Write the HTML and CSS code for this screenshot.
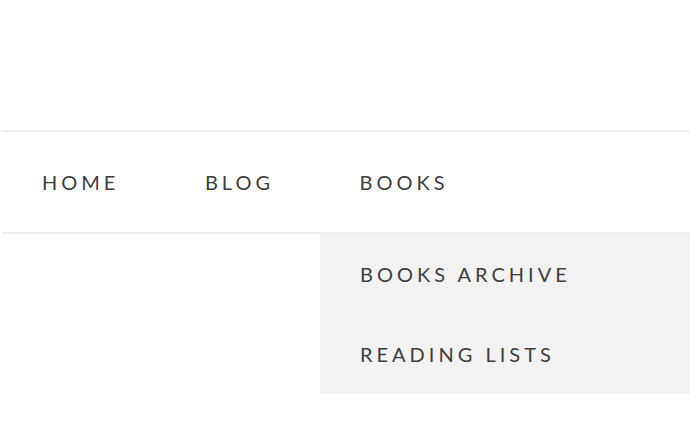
FILE: index.html
```html
<!DOCTYPE html>
<html lang="en">
<head>
    <title>Books</title>
    <meta name="viewport" content="width=device-width, initial-scale=1.0">
    <link rel="stylesheet" href="styles.css">
</head>
<body>

    <!-- Site header (logo area left empty) -->
    <header class="site-header"></header>

    <!-- Main navigation -->
    <nav class="main-nav">
        <ul class="menu">
            <li class="menu-item"><a href="#">Home</a></li>
            <li class="menu-item"><a href="#">Blog</a></li>
            <li class="menu-item"><a href="#">Books</a></li>
        </ul>
    </nav>

    <!-- Open dropdown under "Books" -->
    <div class="dropdown-row">
        <ul class="sub-menu">
            <li><a href="#">Books Archive</a></li>
            <li><a href="#">Reading Lists</a></li>
        </ul>
    </div>

</body>
</html>
```

FILE: styles.css
```css
body {
    margin: 0;
    background-color: #fff;
    color: #3d3d3d;
    font-family: 'Lato', 'Liberation Sans', sans-serif;
}

.site-header {
    height: 130px;
}

/* Navigation bar */
.main-nav {
    margin-left: 2px;
    border-top: 2px solid #eeeeee;
    border-bottom: 2px solid #eeeeee;
}

.menu {
    list-style: none;
    margin: 0;
    padding: 0;
    display: flex;
}

.menu-item a {
    display: block;
    height: 100px;
    line-height: 100px;
    padding: 0 45.5px 0 40px;
    color: #3d3d3d;
    text-decoration: none;
    text-transform: uppercase;
    font-size: 20px;
    letter-spacing: 4px;
}

/* Dropdown */
.dropdown-row {
    display: flex;
    padding-left: 320px;
}

.sub-menu {
    flex: 1;
    margin: 0;
    padding: 0;
    list-style: none;
    background: #f2f2f2;
}

.sub-menu a {
    display: block;
    height: 80px;
    line-height: 80px;
    padding: 0 40px;
    color: #3d3d3d;
    text-decoration: none;
    text-transform: uppercase;
    font-size: 20px;
    letter-spacing: 4px;
}
```
